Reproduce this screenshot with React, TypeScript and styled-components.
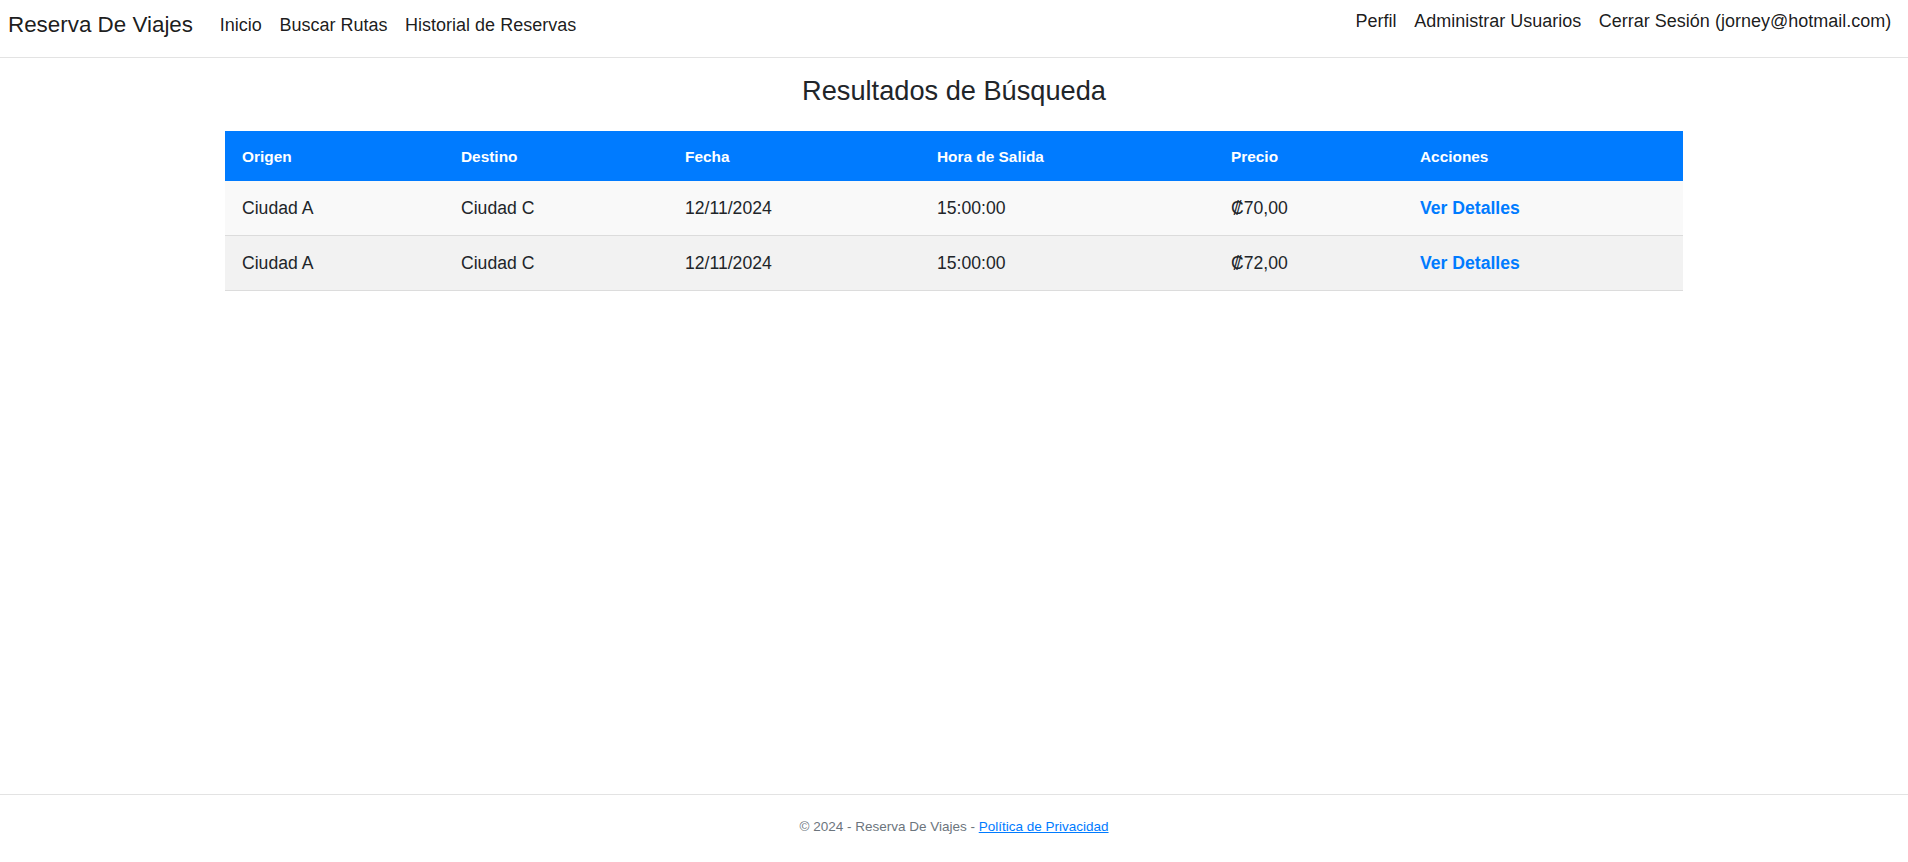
import styled, { createGlobalStyle } from 'styled-components';

const GlobalStyle = createGlobalStyle`
  html, body {
    margin: 0;
    padding: 0;
    background: #fff;
    font-family: "Liberation Sans", Arial, sans-serif;
    color: #212529;
  }
  * { box-sizing: border-box; }
`;

type Route = {
    origen: string;
    destino: string;
    fecha: string;
    hora: string;
    precio: string;
};

const routes: Array<Route> = [
    { origen: 'Ciudad A', destino: 'Ciudad C', fecha: '12/11/2024', hora: '15:00:00', precio: '₡70,00' },
    { origen: 'Ciudad A', destino: 'Ciudad C', fecha: '12/11/2024', hora: '15:00:00', precio: '₡72,00' },
];

const columns = [
    { title: 'Origen', width: 219 },
    { title: 'Destino', width: 224 },
    { title: 'Fecha', width: 252 },
    { title: 'Hora de Salida', width: 294 },
    { title: 'Precio', width: 189 },
    { title: 'Acciones', width: 280 },
];

export default function App() {
    return (
        <Page>
            <GlobalStyle />
            <Navbar>
                <NavGroup>
                    <Brand href="#">Reserva De Viajes</Brand>
                    <NavLink href="#">Inicio</NavLink>
                    <NavLink href="#">Buscar Rutas</NavLink>
                    <NavLink href="#">Historial de Reservas</NavLink>
                </NavGroup>
                <NavGroup>
                    <NavLink href="#">Perfil</NavLink>
                    <NavLink href="#">Administrar Usuarios</NavLink>
                    <NavLink href="#">Cerrar Sesión (jorney@hotmail.com)</NavLink>
                </NavGroup>
            </Navbar>

            <Main>
                <Title>Resultados de Búsqueda</Title>
                <Table>
                    <colgroup>
                        {columns.map((c) => (<col key={c.title} style={{ width: c.width }} />))}
                    </colgroup>
                    <thead>
                        <tr>
                            {columns.map((c) => (<HeadCell key={c.title}>{c.title}</HeadCell>))}
                        </tr>
                    </thead>
                    <tbody>
                        {routes.map((r, i) => (
                            <Row key={i} $striped={i % 2 === 0}>
                                <Cell>{r.origen}</Cell>
                                <Cell>{r.destino}</Cell>
                                <Cell>{r.fecha}</Cell>
                                <Cell>{r.hora}</Cell>
                                <Cell>{r.precio}</Cell>
                                <Cell><DetailLink href="#">Ver Detalles</DetailLink></Cell>
                            </Row>
                        ))}
                    </tbody>
                </Table>
            </Main>

            <Footer>
                © 2024 - Reserva De Viajes - <FooterLink href="#">Política de Privacidad</FooterLink>
            </Footer>
        </Page>
    );
}

const Page = styled.div`
  display: flex;
  flex-direction: column;
  min-height: 100vh;
`;

const Navbar = styled.nav`
  display: flex;
  justify-content: space-between;
  align-items: flex-start;
  height: 58px;
  padding: 8px 8px 0 8px;
  border-bottom: 1px solid #e3e3e3;
`;

const NavGroup = styled.div`
  display: flex;
  align-items: center;
`;

const Brand = styled.a`
  font-size: 22.4px;
  line-height: 33px;
  color: rgba(0, 0, 0, 0.9);
  text-decoration: none;
  margin-right: 18px;
`;

const NavLink = styled.a`
  font-size: 18px;
  line-height: 26px;
  padding: 0 8.8px;
  color: rgba(0, 0, 0, 0.9);
  text-decoration: none;
`;

const Main = styled.main`
  flex: 1;
  display: flex;
  flex-direction: column;
  align-items: center;
  padding-top: 17px;
`;

const Title = styled.h2`
  margin: 0 0 23.5px 0;
  font-size: 27.2px;
  line-height: 1.2;
  font-weight: 400;
  color: #212529;
`;

const Table = styled.table`
  width: 1458px;
  border-collapse: collapse;
  table-layout: fixed;
`;

const HeadCell = styled.th`
  background: #007bff;
  color: #fff;
  text-align: left;
  font-size: 15.4px;
  font-weight: 700;
  line-height: 23px;
  padding: 13.5px 17px;
`;

const Row = styled.tr<{ $striped: boolean }>`
  background: ${(p) => (p.$striped ? '#f9f9f9' : '#f2f2f2')};
  border-bottom: 1px solid #dcdcdc;
`;

const Cell = styled.td`
  font-size: 17.6px;
  line-height: 26px;
  padding: 14px 17px;
  color: #212529;
`;

const DetailLink = styled.a`
  color: #007bff;
  font-weight: 700;
  text-decoration: none;
`;

const Footer = styled.footer`
  border-top: 1px solid #e3e3e3;
  padding: 20px 0 24px;
  text-align: center;
  font-size: 13.5px;
  line-height: 23px;
  color: #6c757d;
`;

const FooterLink = styled.a`
  color: #007bff;
  text-decoration: underline;
`;
